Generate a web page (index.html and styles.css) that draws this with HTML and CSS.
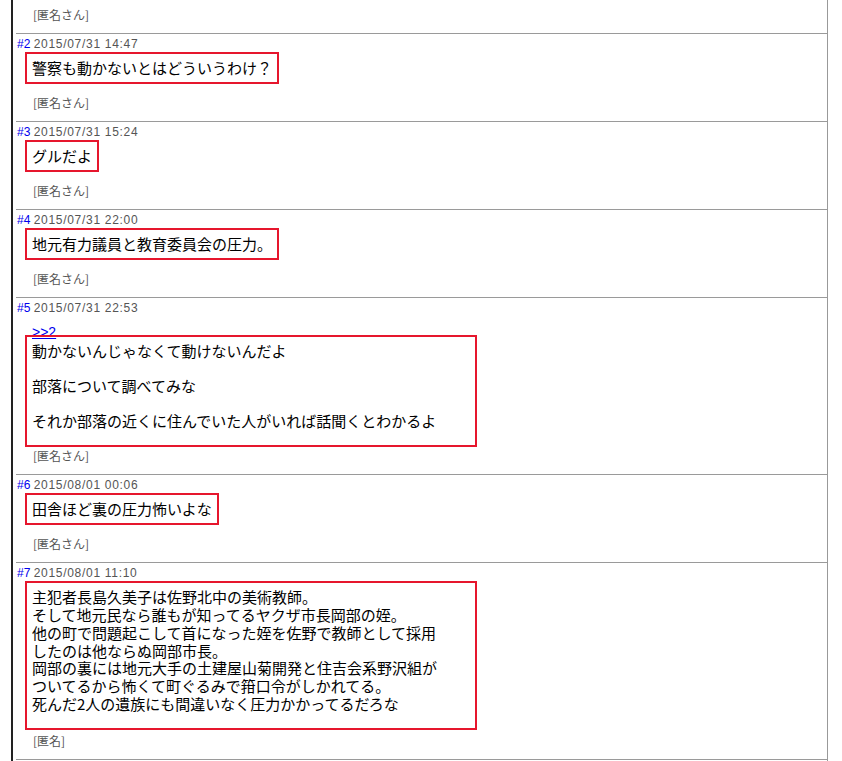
FILE: index.html
```html
<!DOCTYPE html>
<html lang="ja">
<head>
    <meta charset="UTF-8">
    <title>スレッド</title>
    <link rel="stylesheet" href="styles.css">
</head>
<body>
    <div class="thread">
        <div class="list">
            <div class="post top">
                <div class="sig">[匿名さん]</div>
            </div>

            <div class="post">
                <div class="head"><a class="no">#2</a> <span class="date">2015/07/31 14:47</span></div>
                <div class="msg">警察も動かないとはどういうわけ？</div>
                <div class="sig">[匿名さん]</div>
            </div>

            <div class="post">
                <div class="head"><a class="no">#3</a> <span class="date">2015/07/31 15:24</span></div>
                <div class="msg">グルだよ</div>
                <div class="sig">[匿名さん]</div>
            </div>

            <div class="post">
                <div class="head"><a class="no">#4</a> <span class="date">2015/07/31 22:00</span></div>
                <div class="msg">地元有力議員と教育委員会の圧力。</div>
                <div class="sig">[匿名さん]</div>
            </div>

            <div class="post">
                <div class="head"><a class="no">#5</a> <span class="date">2015/07/31 22:53</span></div>
                <div class="reply"><a>&gt;&gt;2</a></div>
                <div class="msg wide after-reply">動かないんじゃなくて動けないんだよ<br><br>部落について調べてみな<br><br>それか部落の近くに住んでいた人がいれば話聞くとわかるよ</div>
                <div class="sig">[匿名さん]</div>
            </div>

            <div class="post">
                <div class="head"><a class="no">#6</a> <span class="date">2015/08/01 00:06</span></div>
                <div class="msg">田舎ほど裏の圧力怖いよな</div>
                <div class="sig">[匿名さん]</div>
            </div>

            <div class="post">
                <div class="head"><a class="no">#7</a> <span class="date">2015/08/01 11:10</span></div>
                <div class="msg wide long">主犯者長島久美子は佐野北中の美術教師。<br>そして地元民なら誰もが知ってるヤクザ市長岡部の姪。<br>他の町で問題起こして首になった姪を佐野で教師として採用<br>したのは他ならぬ岡部市長。<br>岡部の裏には地元大手の土建屋山菊開発と住吉会系野沢組が<br>ついてるから怖くて町ぐるみで箝口令がしかれてる。<br>死んだ2人の遺族にも間違いなく圧力かかってるだろな</div>
                <div class="sig">[匿名]</div>
            </div>

            <div class="post last"></div>
        </div>
    </div>
</body>
</html>
```

FILE: styles.css
```css
body {
    margin: 0;
    background-color: #fff;
    font-family: "Liberation Sans", Arial, sans-serif;
}
.thread {
    margin-left: 11px;
    border-left: 2px solid #222;
}
.list {
    margin-left: 3px;
    width: 811px;
    border-right: 1px solid #999;
}
.post {
    border-top: 1px solid #9a9a9a;
    padding: 2px 0 10px;
}
.post.top {
    border-top: none;
    padding-top: 7px;
}
.post.top .sig {
    margin-top: 0;
}
.post.last {
    height: 20px;
    padding: 0;
}
.head {
    height: 16px;
    line-height: 16px;
    padding-left: 1px;
    font-size: 12px;
    white-space: nowrap;
}
.no {
    color: #0000ee;
}
.date {
    color: #555;
    letter-spacing: 0.7px;
}
.reply {
    margin: 7px 0 0 16px;
    height: 19px;
    line-height: 19px;
    font-size: 14px;
}
.reply a {
    color: #0000ee;
    text-decoration: underline;
}
.msg {
    width: fit-content;
    margin: 7px 0 0 16px;
    font-family: "Noto Sans CJK JP", sans-serif;
    font-size: 15px;
    line-height: 17.6px;
    color: #000;
    outline: 2px solid #e6162d;
    outline-offset: 5px;
}
.msg.after-reply {
    margin-top: 0;
}
.msg.wide {
    width: 438px;
    padding-bottom: 10px;
    margin-bottom: -10px;
}
.msg.long {
    line-height: 17.8px;
    margin-bottom: -8px;
}
.sig {
    margin: 18.4px 0 0 17px;
    font-family: "Noto Sans CJK JP", sans-serif;
    font-size: 12px;
    line-height: 16px;
    color: #555;
}
```
